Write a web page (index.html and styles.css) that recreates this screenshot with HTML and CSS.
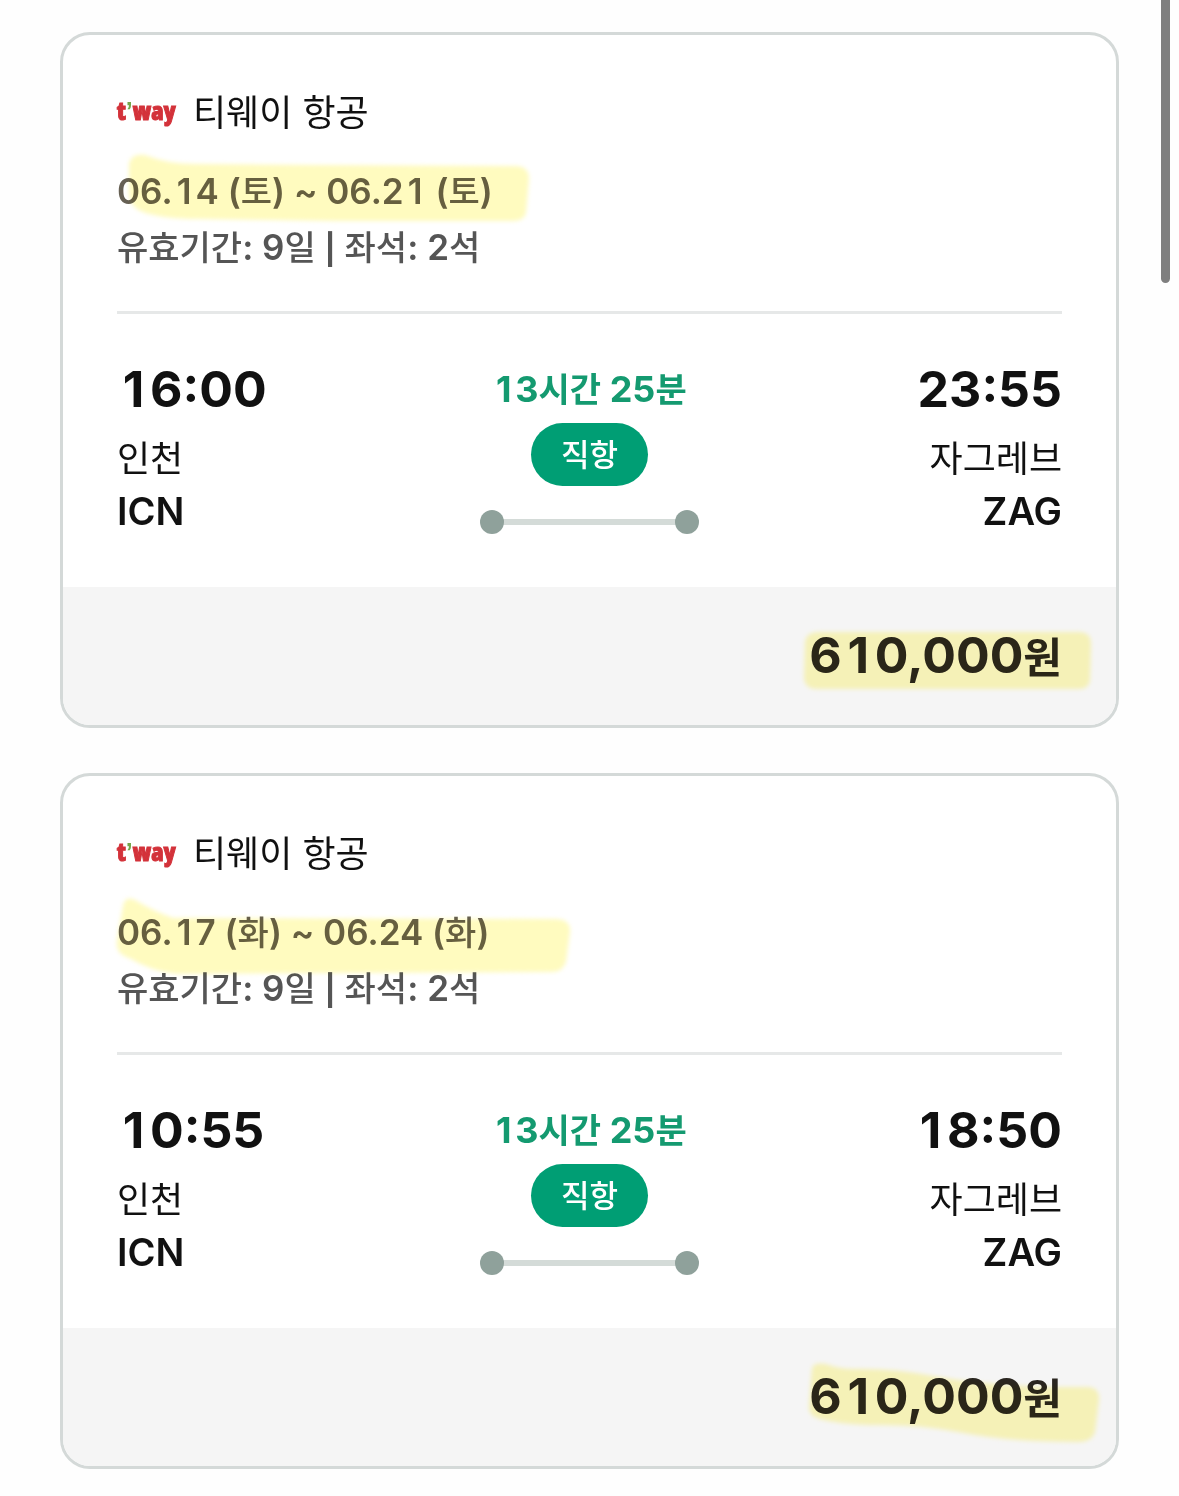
FILE: index.html
```
<!DOCTYPE html>
<html lang="ko">
<head>
  <meta charset="UTF-8">
  <meta name="viewport" content="width=device-width, initial-scale=1">
  <title>항공권 목록</title>
  <link rel="stylesheet" href="styles.css">
</head>
<body>

  <main class="list">

    <article class="card">
      <div class="card-body">
        <h2 class="airline"><span class="logo">t<i>’</i>way</span>티웨이 항공</h2>
        <p class="dates">
          <svg class="marker marker-date" viewBox="0 0 460 80" aria-hidden="true">
            <path d="M12 16 Q15 6 28 8 Q50 17 78 17 L200 18 L400 19 Q412 20 412 32 L409 66 Q407 74 396 74 L220 74 L80 72 Q45 72 26 65 Q12 60 12 44 Z"/>
          </svg>
          06.<span class="one">1</span>4 (<span class="ko">토</span>) ~ 06.2<span class="one">1</span> (<span class="ko">토</span>)
        </p>
        <p class="info"><span class="ko">유효기간</span>: 9<span class="ko">일</span> <span class="bar">|</span> <span class="ko">좌석</span>: 2<span class="ko">석</span></p>
        <div class="route">
          <div class="stop">
            <time class="time"><span class="one">1</span>6:00</time>
            <span class="city">인천</span>
            <span class="code">ICN</span>
          </div>
          <div class="leg">
            <span class="duration"><span class="one">1</span>3<span class="ko">시간</span> 25<span class="ko">분</span></span>
            <span class="badge">직항</span>
            <div class="track"></div>
          </div>
          <div class="stop arrival">
            <time class="time">23:55</time>
            <span class="city">자그레브</span>
            <span class="code">ZAG</span>
          </div>
        </div>
      </div>
      <div class="card-footer">
        <p class="price">
          <svg class="marker marker-price" viewBox="0 0 310 100" aria-hidden="true">
            <path d="M5 24 Q7 15 19 15 L281 15 Q291 16 291 27 L290 63 Q289 72 279 72 L17 72 Q5 72 4 61 Z"/>
          </svg>
          6<span class="one">1</span>0,000<span class="won">원</span>
        </p>
      </div>
    </article>

    <article class="card">
      <div class="card-body">
        <h2 class="airline"><span class="logo">t<i>’</i>way</span>티웨이 항공</h2>
        <p class="dates">
          <svg class="marker marker-date" viewBox="0 0 460 80" aria-hidden="true">
            <path d="M6 18 Q8 7 18 12 Q36 23 56 30 L440 31 Q454 32 453 44 L449 74 Q446 84 434 84 L60 86 Q36 84 12 70 Q-2 66 0 52 Z"/>
          </svg>
          06.<span class="one">1</span>7 (<span class="ko">화</span>) ~ 06.24 (<span class="ko">화</span>)
        </p>
        <p class="info"><span class="ko">유효기간</span>: 9<span class="ko">일</span> <span class="bar">|</span> <span class="ko">좌석</span>: 2<span class="ko">석</span></p>
        <div class="route">
          <div class="stop">
            <time class="time"><span class="one">1</span>0:55</time>
            <span class="city">인천</span>
            <span class="code">ICN</span>
          </div>
          <div class="leg">
            <span class="duration"><span class="one">1</span>3<span class="ko">시간</span> 25<span class="ko">분</span></span>
            <span class="badge">직항</span>
            <div class="track"></div>
          </div>
          <div class="stop arrival">
            <time class="time"><span class="one">1</span>8:50</time>
            <span class="city">자그레브</span>
            <span class="code">ZAG</span>
          </div>
        </div>
      </div>
      <div class="card-footer">
        <p class="price">
          <svg class="marker marker-price" viewBox="0 0 310 100" aria-hidden="true">
            <path d="M12 10 Q14 4 26 6 Q38 11 54 11 Q93 10 133 18 Q198 30 288 29 Q300 30 299 42 L295 74 Q292 84 278 84 Q208 84 158 74 Q118 66 68 67 Q38 66 20 61 Q8 58 9 48 Z"/>
          </svg>
          6<span class="one">1</span>0,000<span class="won">원</span>
        </p>
      </div>
    </article>

  </main>

  <div class="scroll-thumb"></div>

</body>
</html>
```
FILE: styles.css
```
* {
  box-sizing: border-box;
}

body {
  margin: 0;
  background: #fefefe;
  color: #111;
  font-family: Inter, "Noto Sans CJK KR", sans-serif;
}

h2,
p {
  margin: 0;
}

.list {
  display: flex;
  flex-direction: column;
  gap: 45px;
  padding: 32px 60px 27px;
}

.card {
  border: 3px solid #d4d9d8;
  border-radius: 30px;
  background: #fff;
  overflow: hidden;
}

.card-body {
  padding: 55px 54px 50px;
}

.airline {
  display: flex;
  align-items: center;
  gap: 15px;
  margin-bottom: 27px;
  font-size: 36px;
  font-weight: 400;
  line-height: 46px;
}

.logo {
  width: 61px;
  padding-bottom: 4px;
  color: #d3323a;
  font-family: "Open Sans", sans-serif;
  font-size: 25px;
  font-weight: 800;
  font-stretch: condensed;
  line-height: 1;
  white-space: nowrap;
  -webkit-text-stroke: 1px #d3323a;
}

.logo i {
  color: #74a84a;
  font-family: "Liberation Sans", sans-serif;
  font-style: normal;
  -webkit-text-stroke: 0;
}

.dates,
.info {
  font-size: 35px;
  font-weight: 600;
  line-height: 56px;
  color: #555;
}

.dates {
  position: relative;
  color: #666054;
}

.ko {
  font-size: 34px;
  font-weight: 500;
  line-height: 1;
}

.bar {
  font-size: 30px;
  font-weight: 700;
  line-height: 1;
}

/* the figure 1 takes as much room as the other digits */
.one {
  display: inline-block;
  width: 23px;
  line-height: 1;
  text-align: center;
}

.time .one,
.price .one {
  width: 33px;
}

/* highlighter strokes over the text */
.marker {
  position: absolute;
  overflow: visible;
  fill: #fffbbf;
  filter: blur(2px);
  mix-blend-mode: multiply;
}

.marker-date {
  top: -16px;
  left: 0;
  width: 460px;
  height: 80px;
}

.marker-price {
  top: -8px;
  right: -48px;
  width: 310px;
  height: 100px;
}

.route {
  display: flex;
  justify-content: space-between;
  margin-top: 36px;
  padding-top: 48px;
  border-top: 3px solid #e6e8e8;
}

.stop {
  display: flex;
  flex: 1;
  flex-direction: column;
}

.arrival {
  align-items: flex-end;
}

.time {
  margin-bottom: 17px;
  font-size: 50px;
  font-weight: 700;
  line-height: 54px;
}

.city {
  font-size: 36px;
  line-height: 52px;
}

.code {
  font-size: 38px;
  font-weight: 600;
  line-height: 52px;
}

.leg {
  display: flex;
  flex-direction: column;
  align-items: center;
}

.duration {
  color: #149a70;
  font-size: 36px;
  font-weight: 700;
  line-height: 54px;
}

.duration .ko {
  font-weight: 700;
}

.badge {
  margin: 7px 0 24px;
  padding: 0 30px;
  border-radius: 32px;
  background: #009e74;
  color: #fff;
  font-size: 31px;
  font-weight: 500;
  line-height: 63px;
}

.track {
  display: flex;
  align-items: center;
  justify-content: space-between;
  width: 219px;
  background: linear-gradient(#d4dbd8, #d4dbd8) center / 195px 6px no-repeat;
}

.track::before,
.track::after {
  content: "";
  width: 24px;
  height: 24px;
  border-radius: 50%;
  background: #8fa19b;
}

.card-footer {
  display: flex;
  justify-content: flex-end;
  padding: 38px 54px 40px;
  background: #f5f5f5;
}

.price {
  position: relative;
  color: #2a2620;
  font-size: 50px;
  font-weight: 700;
  line-height: 60px;
}

.won {
  font-size: 42px;
  line-height: 1;
}

.scroll-thumb {
  position: fixed;
  top: -10px;
  right: 9px;
  width: 9px;
  height: 293px;
  border-radius: 5px;
  background: #7f7f7f;
}
```
